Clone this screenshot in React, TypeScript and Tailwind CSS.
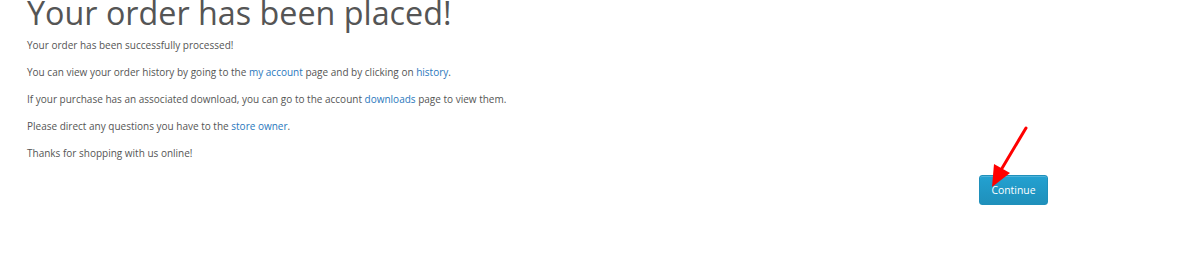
import React from "react";

export default function App() {
  const font = { fontFamily: '"Open Sans", "DejaVu Sans", sans-serif' };
  return (
    <div className="relative h-[279px] w-[1203px] overflow-hidden bg-white" style={font}>
      <div className="ml-[27px] w-[1021px]">
        <h1 className="mb-[12px] text-[32.3px] leading-[25px] font-normal text-[#555]">
          Your order has been placed!
        </h1>
        <div className="text-[10px] leading-[17px] text-[#555]">
          <p className="mb-[10px]">Your order has been successfully processed!</p>
          <p className="mb-[10px]">
            You can view your order history by going to the{" "}
            <a className="text-[#2a78bd]">my account</a> page and by clicking on{" "}
            <a className="text-[#2a78bd]">history</a>.
          </p>
          <p className="mb-[10px]">
            If your purchase has an associated download, you can go to the account{" "}
            <a className="text-[#2a78bd]">downloads</a> page to view them.
          </p>
          <p className="mb-[10px]">
            Please direct any questions you have to the{" "}
            <a className="text-[#2a78bd]">store owner</a>.
          </p>
          <p>Thanks for shopping with us online!</p>
        </div>
        <div className="mt-[13px] flex justify-end">
          <button className="flex h-[30px] w-[69px] items-center justify-center rounded-[3px] border border-[#1f90bb] bg-gradient-to-b from-[#23a1d1] to-[#1f90bb] pt-[1px] text-[10.4px] text-white shadow-[inset_0_1px_0_rgba(255,255,255,0.2)]">
            Continue
          </button>
        </div>
      </div>

      {/* annotation arrow pointing at the button */}
      <svg className="pointer-events-none absolute left-0 top-0" width="1203" height="279">
        <line x1="1026" y1="128" x2="1001" y2="170" stroke="#f00" strokeWidth="3" strokeLinecap="round" />
        <polygon points="992,187 994,164 1010,173" fill="#f00" />
      </svg>
    </div>
  );
}
